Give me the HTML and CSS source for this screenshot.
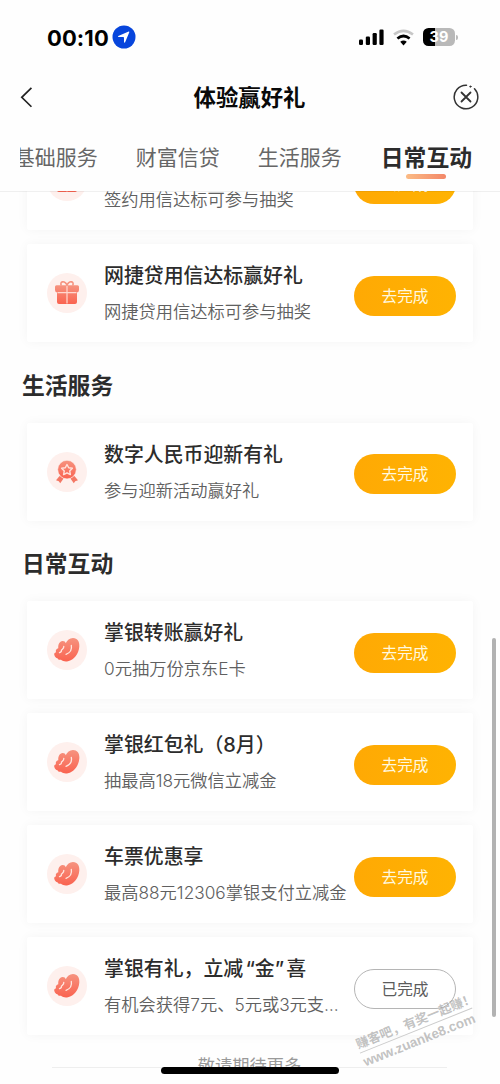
FILE: index.html
```html
<!DOCTYPE html>
<html lang="zh-CN">
<head>
<meta charset="utf-8">
<title>体验赢好礼</title>
<link rel="stylesheet" href="styles.css">
</head>
<body>
<svg class="defs" width="0" height="0">
  <defs>
    <linearGradient id="coral" x1="0" y1="0" x2="0" y2="1"><stop offset="0" stop-color="#f6937f"/><stop offset="1" stop-color="#fa6350"/></linearGradient>
    <symbol id="gift" viewBox="0 0 40 40">
      <path d="M14.300 12.500c-2-4 3.200-5.500 5.700-.5c2.500-5 7.700-3.500 5.700.5" fill="none" stroke="#f6937f" stroke-width="1.600"/>
      <path d="M9.500 12.300h21q1.500 0 1.500 1.500v3.200q0 2-2 2.500v9.500q0 2-2 2h-16q-2 0-2-2v-9.500Q8 19 8 17v-3.200q0-1.500 1.500-1.500z" fill="url(#coral)"/>
      <path d="M20 13v17.500M10.500 19.600h19" stroke="#ffd8d0" stroke-width="1.200"/>
    </symbol>
    <symbol id="medal" viewBox="0 0 40 40">
      <path d="M9 28.200l3.600-4.200 4 2.600-3.400 4.600-1.400-2zM31 28.200l-3.600-4.200-4 2.600 3.400 4.600 1.400-2z" fill="#f47865"/>
      <circle cx="20" cy="17.600" r="9.300" fill="url(#coral)" stroke="#fef0ed" stroke-width=".6"/>
      <path d="M20 12.500l1.700 3.300 3.700.5-2.700 2.600.7 3.700-3.400-1.800-3.400 1.800.7-3.700-2.700-2.600 3.700-.5z" fill="none" stroke="#ffe3dc" stroke-width="1.400" stroke-linejoin="round"/>
    </symbol>
    <symbol id="clap" viewBox="0 0 40 40">
      <path d="M7.500 25.500c-.8-1.800.1-3 1.500-3.300-.7-2 .4-3.600 2.300-4C11 14.500 12.500 11.300 15.500 11c1.700-.1 2.800.8 3.200 2.300C20.200 10.200 22.500 8 26 8c4.500 0 6.800 3.500 6.300 8.700-.7 7.300-5.300 13.200-11.300 14.500-3 .6-5.300-.1-7-1.500-1.700.2-3-.2-3.500-1.500-1.500-.2-2.600-1.200-3-2.700z" fill="url(#coral)"/>
      <path d="M24.300 15.500c.8 4-1.200 7.300-5.300 8.800M16.800 16.300c.1 1.200-.4 2.200-1.400 3M14.500 20c.2 1.200-.6 2.200-2 2.700" fill="none" stroke="#ffe6df" stroke-width="1.300" stroke-linecap="round"/>
    </symbol>
  </defs>
</svg>
<div class="screen">
  <div class="status">
    <span class="time">00:10</span>
    <svg class="location" viewBox="0 0 24 24"><circle cx="12" cy="12" r="11.500" fill="#0745dc"/><path d="M6.300 11L16.700 6.500Q17.500 6.300 17.300 7.200L13 17.500Q12.300 18 12 17V12.500Q11.700 12 11.200 12L6.500 12Q5.500 11.500 6.300 11z" fill="#fff"/></svg>
    <svg class="signal" viewBox="0 0 26 17"><rect x="1" y="10.500" width="4" height="5.500" rx="1.200"/><rect x="7.800" y="7.500" width="4.200" height="8.500" rx="1.200"/><rect x="14.600" y="4" width="4.200" height="12" rx="1.200"/><rect x="21.400" y="0.500" width="4.200" height="15.500" rx="1.200"/></svg>
    <svg class="wifi" viewBox="0 0 20 16"><g fill="none"><path d="M1 5.200Q10-2 19 5.200" stroke="#c7c7c7" stroke-width="2.500"/><path d="M4.200 8.900Q10 4.200 15.800 8.900" stroke="#000" stroke-width="2.600"/></g><path d="M6.900 12Q10 9.700 13.100 12L10 15.500z"/></svg>
    <div class="battery"><span>39</span></div>
    <i class="battery-cap"></i>
  </div>
  <header class="header">
    <svg class="back" viewBox="0 0 12 20"><path d="M10.700.8L1.500 9.800l9.200 9" fill="none" stroke="#222" stroke-width="1.600"/></svg>
    <h1>体验赢好礼</h1>
    <svg class="close" viewBox="0 0 26 26" fill="none" stroke="#333" stroke-linecap="round"><path d="M13.500 1.200A11.800 11.800 0 1 0 21.500 4.800" stroke-width="1.500"/><path d="M8.500 8.500l9 9M17.500 8.500l-9 9" stroke-width="1.800"/><circle cx="17.400" cy="2.600" r=".7" fill="#333" stroke-width=".8"/></svg>
  </header>
  <nav class="tabs">
    <span>基础服务</span><span>财富信贷</span><span>生活服务</span><span class="active">日常互动</span>
  </nav>
  <main class="list">
    <div class="track">
      <article class="card"><div class="badge"><svg><use href="#gift"/></svg></div><div class="text"><h3>签约用信达标赢好礼</h3><p>签约用信达标可参与抽奖</p></div><button class="btn">去完成</button></article>
      <article class="card"><div class="badge"><svg><use href="#gift"/></svg></div><div class="text"><h3>网捷贷用信达标赢好礼</h3><p>网捷贷用信达标可参与抽奖</p></div><button class="btn">去完成</button></article>
      <h2>生活服务</h2>
      <article class="card"><div class="badge"><svg><use href="#medal"/></svg></div><div class="text"><h3>数字人民币迎新有礼</h3><p>参与迎新活动赢好礼</p></div><button class="btn">去完成</button></article>
      <h2>日常互动</h2>
      <article class="card"><div class="badge"><svg><use href="#clap"/></svg></div><div class="text"><h3>掌银转账赢好礼</h3><p>0元抽万份京东E卡</p></div><button class="btn">去完成</button></article>
      <article class="card"><div class="badge"><svg><use href="#clap"/></svg></div><div class="text"><h3>掌银红包礼（8月）</h3><p>抽最高18元微信立减金</p></div><button class="btn">去完成</button></article>
      <article class="card"><div class="badge"><svg><use href="#clap"/></svg></div><div class="text"><h3>车票优惠享</h3><p>最高88元12306掌银支付立减金</p></div><button class="btn">去完成</button></article>
      <article class="card"><div class="badge"><svg><use href="#clap"/></svg></div><div class="text"><h3>掌银有礼，立减<span class="quote">“</span>金<span class="quote close-quote">”</span>喜</h3><p>有机会获得7元、5元或3元支…</p></div><button class="btn done">已完成</button></article>
      <div class="more"><span>敬请期待更多</span></div>
    </div>
  </main>
  <i class="scrollbar"></i>
  <div class="watermark"><div>赚客吧，有奖一起赚！</div><div class="site">www.zuanke8.com</div></div>
  <i class="home"></i>
</div>
</body>
</html>
```
FILE: styles.css
```css
* { box-sizing: border-box; }
body { margin: 0; background: #fefefe; font-family: "Noto Sans CJK SC", sans-serif; color: #2c2c2c; }
h1, h2, h3, p { margin: 0; }
.defs { position: absolute; }
.screen { position: relative; width: 500px; height: 1084px; padding-bottom: 14px; overflow: hidden; display: flex; flex-direction: column; }

.status { height: 74px; flex: none; display: flex; align-items: center; padding: 0 42px 0 47px; }
.time { width: 64px; padding-top: 1px; font: 700 22px/24px Inter, sans-serif; letter-spacing: 0.1px; color: #000; }
.location { width: 24px; height: 24px; margin-left: 1px; }
.signal { width: 26px; height: 17px; margin-left: auto; }
.wifi { width: 21px; height: 17px; margin-left: 9px; }
.battery { width: 32px; height: 18px; margin-left: 9px; border-radius: 5.500px; background: linear-gradient(90deg, #000 39%, #b9b9b9 39%); color: #fff; font: 700 14.500px/18px Inter, sans-serif; text-align: center; }
.battery-cap { width: 2px; height: 5px; margin-left: 1px; border-radius: 0 2px 2px 0; background: #bbb; }

.header { height: 46px; flex: none; display: flex; align-items: center; justify-content: space-between; padding: 0 21px 0 20px; }
.header h1 { font-size: 22.400px; line-height: 30px; font-weight: 700; color: #0a0a0a; margin: -2px 0 0 13px; }
.back { width: 13px; height: 21px; }
.close { width: 26px; height: 26px; }

.tabs { height: 71px; flex: none; margin-left: 20px; padding-top: 21px; display: flex; justify-content: flex-end; gap: 38px; overflow: hidden; padding-right: 28px; font-size: 21px; line-height: 30px; color: #666; white-space: nowrap; }
.tabs span { flex: none; }
.tabs .active { display: flex; flex-direction: column; align-items: center; margin-left: 1px; font-size: 22.800px; font-weight: 700; line-height: 32px; color: #2c2c2c; }
.tabs .active::after { content: ""; width: 40px; height: 5px; margin-top: 1px; border-radius: 3px; background: linear-gradient(90deg, #fbbb85, #f38768); }

.list { position: relative; flex: 1; min-height: 0; overflow: hidden; }
.list::before { content: ""; position: absolute; z-index: 1; left: 0; right: 0; top: 0; height: 1px; background: rgba(0, 0, 0, 0.06); }
.track { margin-top: -59px; padding: 0 27px; }
.card { height: 98px; display: flex; align-items: center; padding: 0 17px 0 20px; background: #fff; border-radius: 2px; box-shadow: 0 0 12px rgba(0, 0, 0, 0.045); }
.card + .card { margin-top: 14px; }
.badge { width: 40px; height: 40px; flex: none; border-radius: 50%; background: #fef0ed; }
.badge svg { display: block; width: 40px; height: 40px; }
.text { flex: 1; min-width: 0; margin-left: 17px; white-space: nowrap; font-family: Inter, "Noto Sans CJK SC", sans-serif; }
.text h3 { padding-top: 1px; font-size: 19.900px; line-height: 30px; font-weight: 500; }
.text p { margin-top: 7px; font-size: 17.250px; line-height: 28px; font-weight: 350; color: #606060; }
.quote { display: inline-block; width: 11.600px; text-align: right; }
.close-quote { text-align: left; }
.btn { width: 102px; height: 40px; flex: none; margin-top: 5px; padding: 0; border: 0; border-radius: 20px; background: linear-gradient(90deg, #ffa904, #ffb302); font: 400 15.700px/38px "Noto Sans CJK SC", sans-serif; color: #fff8df; }
.btn.done { border: 1px solid #b5b5b5; background: #fff; color: #5c5c5c; line-height: 36px; }
.list h2 { height: 80.500px; margin-left: -5px; padding-top: 26.500px; font-size: 22.800px; line-height: 32px; font-weight: 700; }
.more { display: flex; align-items: center; gap: 10px; margin: 14px 26px 0 25px; font-size: 17.250px; line-height: 32px; color: #999; }
.more::before, .more::after { content: ""; flex: 1; height: 1px; margin-top: 4px; background: #eee; }

.scrollbar { position: absolute; right: 4px; top: 638px; width: 4px; height: 379px; border-radius: 2px; background: #b2b2b2; }
.home { position: absolute; left: 161px; top: 1067px; width: 178px; height: 7px; border-radius: 4px; background: #000; }
.watermark { position: absolute; left: 356px; top: 1012px; width: 121px; transform: rotate(-21.900deg); font-size: 12.700px; line-height: 18px; font-weight: 700; color: rgba(160, 160, 160, 0.65); white-space: nowrap; }
.watermark .site { border-top: 1px solid #ccc; font: 700 13.500px/20px "Liberation Sans", sans-serif; }
```
